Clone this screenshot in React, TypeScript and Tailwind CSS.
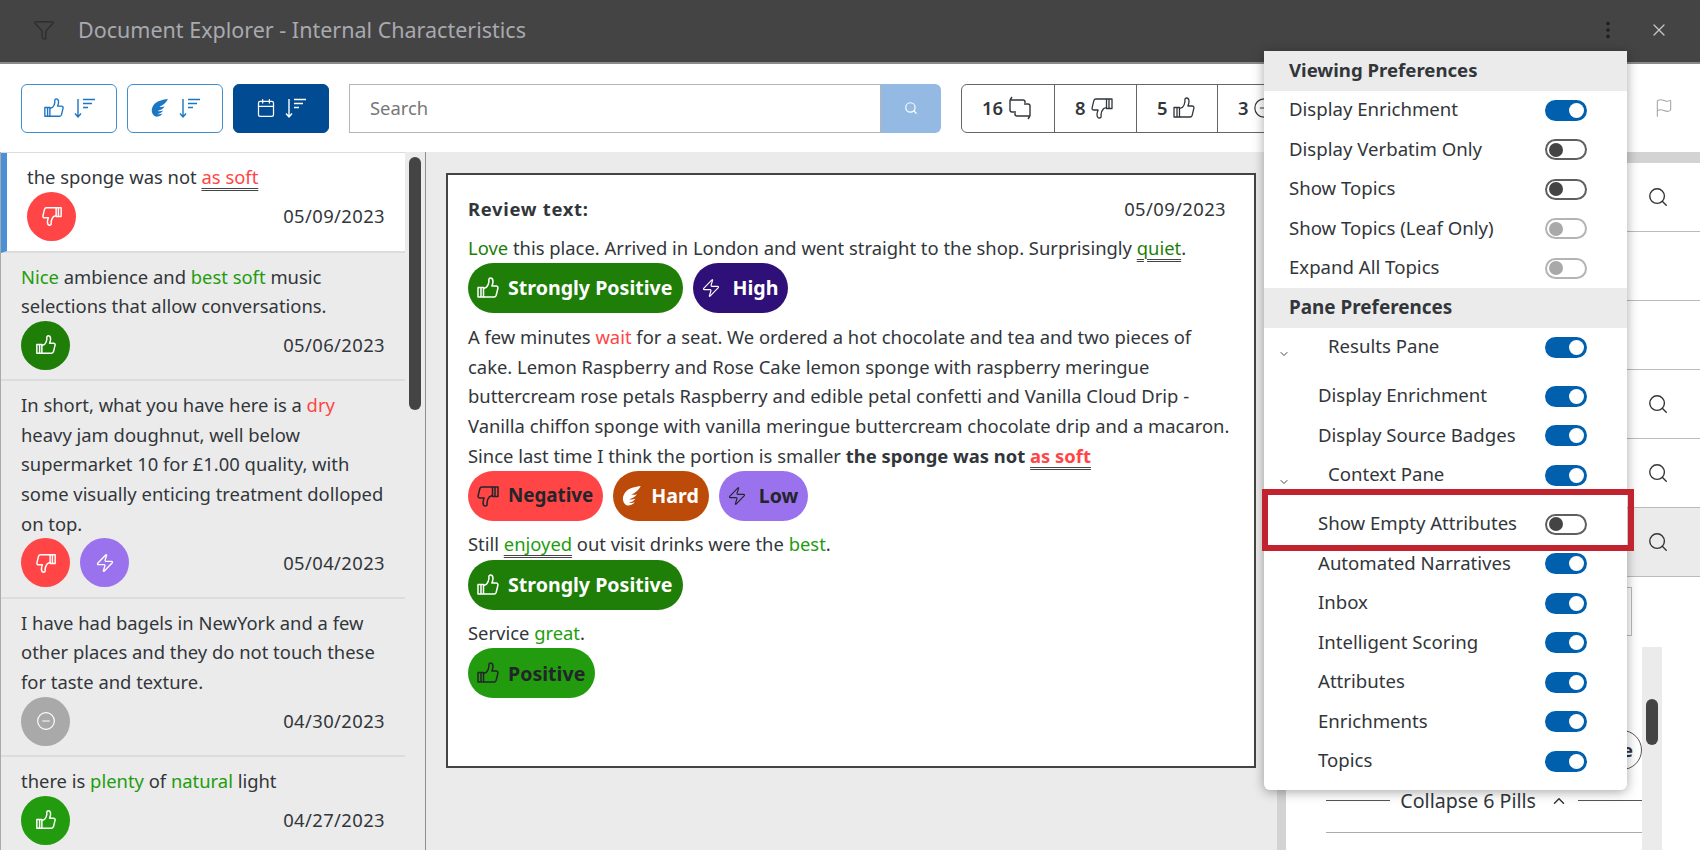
import { Calendar, ChevronDown, ChevronUp, EllipsisVertical, Flag, Funnel, MinusCircle, Search, X, Zap } from "lucide-react";
import type { ReactNode } from "react";

const font = "font-['Noto_Sans','Open_Sans',sans-serif]";

const Thumb = ({ className, sw = 1.5 }: { className?: string; sw?: number }) => (
  <svg viewBox="0 0 24 24" className={className} fill="none" stroke="currentColor" strokeWidth={sw} strokeLinejoin="round">
    <path d="M2 11.500h5.500V21H2z" />
    <path d="M5 11.500V21M7.500 12.500l3-1.200c1.200-1.300 2.200-3.300 2.400-5.500V3.600c0-1 .7-1.600 1.500-1.600 1.600 0 2.600 1.600 2.600 3.500 0 1.500-.5 3-1.100 4.500h4.200c1.300 0 2.100 1 1.800 2.200l-1.700 7c-.3.900-1 1.800-2 1.800H7.500" />
  </svg>
);

const ThumbDown = ({ className, sw }: { className?: string; sw?: number }) => (
  <Thumb className={`rotate-180 ${className ?? ""}`} sw={sw} />
);

const SortLines = ({ className }: { className?: string }) => (
  <svg viewBox="0 0 22 22" className={className} fill="none" stroke="currentColor" strokeWidth="1.4">
    <path d="M4 2v18M1 16.500 4 20l3-3.500" />
    <path d="M9 2.500h12M9 6.500h9M9 10.500h5" />
  </svg>
);

const EffortIcon = ({ className }: { className?: string }) => (
  <svg viewBox="0 0 20 20" className={className} fill="currentColor">
    <path d="M18 1C13 1.500 7 3 4 6.500 1.500 9.500 1 13.500 3 16.500 4 18 6 19 8 18.500c2-.4 3.500-1.500 4.500-3-1.800.8-3.800 1-5.300.5 1.800-.2 4.500-1.300 6-3.500-2 .7-4 .9-5.700.5C10 12.200 13 11 14.500 8.500c-1.700.5-3.500.6-5 .3C12.500 7.500 16 5 18 1Z" />
  </svg>
);

const RepeatChat = ({ className }: { className?: string }) => (
  <svg viewBox="0 0 26 26" className={className} fill="none" stroke="currentColor" strokeWidth="1.4">
    <path d="M3 5h13a2 2 0 0 1 2 2v3M3 5l2-3M3 5v10a2 2 0 0 0 2 2h2" />
    <path d="M23 21H10a2 2 0 0 1-2-2v-3M23 21l-2 3M23 21V11a2 2 0 0 0-2-2h-2" />
  </svg>
);

const Toggle = ({ state }: { state: "on" | "off" | "disabled" }) => {
  if (state === "on") {
    return (
      <span className="flex h-[21px] w-[42px] items-center justify-end rounded-full bg-[#0060ae] pr-[3px]">
        <span className="h-[15px] w-[15px] rounded-full bg-white" />
      </span>
    );
  }
  if (state === "off") {
    return (
      <span className="flex h-[21px] w-[42px] items-center rounded-full border-2 border-[#5f5f5f] bg-white pl-[2px]">
        <span className="h-[14px] w-[14px] rounded-full bg-[#444]" />
      </span>
    );
  }
  return (
    <span className="flex h-[21px] w-[42px] items-center rounded-full border-2 border-[#b4b4b4] bg-white pl-[2px]">
      <span className="h-[14px] w-[14px] rounded-full bg-[#a9a9a9]" />
    </span>
  );
};

const PrefRow = ({ label, state, indent, chevron, h }: { label: string; state: "on" | "off" | "disabled"; indent?: boolean; chevron?: boolean; h?: string }) => (
  <div className={`relative flex items-center justify-between pr-10 text-[18.6px] ${h ?? "h-[39.5px]"} ${indent ? "pl-[54px]" : chevron ? "pl-[64px]" : "pl-[25px]"}`}>
    {chevron && <ChevronDown className="absolute left-[14px] top-[20px] h-[12px] w-[12px] text-[#444]" />}
    <span className="-mt-[2px]">{label}</span>
    <Toggle state={state} />
  </div>
);

const PrefHeader = ({ children, size }: { children: ReactNode; size: string }) => (
  <div className={`flex h-[39.5px] items-center bg-[#ebebeb] pb-[2px] pl-[25px] font-bold ${size}`}>{children}</div>
);

const Dot = ({ color, children }: { color: string; children: ReactNode }) => (
  <span className={`flex h-[49px] w-[49px] items-center justify-center rounded-full text-white ${color}`}>{children}</span>
);

const Item = ({ text, dots, date, active }: { text: ReactNode; dots: ReactNode; date: string; active?: boolean }) => (
  <div className={`border-b-2 border-[#dcdcdc] pb-[9.5px] pl-[20px] pr-5 pt-[9px] ${active ? "border-l-[6px] border-l-[#4a90d9] bg-white pb-[10px]" : ""}`}>
    <p className="leading-[29.6px]">{text}</p>
    <div className="flex items-center justify-between">
      <div className="flex gap-[10px]">{dots}</div>
      <span className="tracking-[0.4px]">{date}</span>
    </div>
  </div>
);

const Pill = ({ color, icon, size = "text-[19.6px]", children }: { color: string; icon: ReactNode; size?: string; children: ReactNode }) => (
  <span className={`flex h-[50px] items-center gap-[8px] rounded-full pl-[8px] pr-[10px] font-bold ${size} ${color}`}>
    {icon}
    {children}
  </span>
);

const Pos = ({ children }: { children: ReactNode }) => <span className="text-[#229c0e]">{children}</span>;
const Neg = ({ children }: { children: ReactNode }) => <span className="text-[#ff4545]">{children}</span>;
const Dbl = ({ children }: { children: ReactNode }) => (
  <span className="underline decoration-[#444] decoration-double decoration-1 underline-offset-4">{children}</span>
);

const SortButton = ({ active, children }: { active?: boolean; children: ReactNode }) => (
  <button className={`flex h-[49px] w-[96px] items-center justify-center gap-[9px] rounded-md border ${active ? "border-[#004b91] bg-[#004b91] text-white" : "border-[#3e8ed0] bg-white text-[#1b76c4]"}`}>
    {children}
    <SortLines className="h-[22px] w-[22px]" />
  </button>
);

const Stat = ({ n, w, children }: { n: string; w: string; children: ReactNode }) => (
  <div className={`flex h-full items-center gap-1 border-r border-[#666] pl-[20px] font-semibold ${w}`}>
    {n}
    {children}
  </div>
);

const SideRow = ({ icon, active }: { icon?: boolean; active?: boolean }) => (
  <div className={`flex h-[69px] items-center justify-end border-b border-[#bbb] pr-[31px] ${active ? "bg-[#ebebeb]" : ""}`}>
    {icon && <Search className="h-[22px] w-[22px] text-[#333]" strokeWidth={1.5} />}
  </div>
);

export default function App() {
  return (
    <div className={`relative flex h-[850px] w-[1700px] flex-col overflow-hidden bg-white text-[18.4px] text-[#32363a] ${font}`}>
      <header className="flex h-[64px] shrink-0 items-center justify-between border-b-2 border-[#8a8a8a] bg-[#444] pb-[2px] pl-[33px] pr-[31px] text-[#a9a9b0]">
        <div className="flex items-center gap-[23px]">
          <Funnel className="h-[22px] w-[22px] text-[#2e2e2e]" strokeWidth={1.5} />
          <span className="text-[21.5px]">Document Explorer - Internal Characteristics</span>
        </div>
        <div className="flex items-center gap-[30px] text-[#c8c8c8]">
          <EllipsisVertical className="h-[22px] w-[22px] text-[#1f1f1f]" />
          <X className="h-[20px] w-[20px]" strokeWidth={1.5} />
        </div>
      </header>

      <div className="flex h-[88px] shrink-0 items-center gap-[10px] pl-[21px] pr-[26px]">
        <SortButton>
          <Thumb className="h-[22px] w-[22px]" />
        </SortButton>
        <SortButton>
          <EffortIcon className="h-[20px] w-[20px]" />
        </SortButton>
        <SortButton active>
          <Calendar className="h-[20px] w-[20px]" strokeWidth={1.5} />
        </SortButton>
        <div className="ml-[10px] flex h-[49px] w-[592px]">
          <div className="flex flex-1 items-center border border-[#b5b5b5] pl-[20px] text-[#777]">Search</div>
          <div className="flex w-[60px] items-center justify-center rounded-r-md bg-[#94bae3] text-white">
            <Search className="h-[14px] w-[14px]" />
          </div>
        </div>
        <div className="ml-[10px] flex h-[49px] w-[340px] items-center rounded-md border border-[#666]">
          <Stat n="16" w="w-[93px]">
            <RepeatChat className="h-[26px] w-[26px]" />
          </Stat>
          <Stat n="8" w="w-[82px]">
            <ThumbDown className="h-[24px] w-[24px]" sw={1.3} />
          </Stat>
          <Stat n="5" w="w-[81px]">
            <Thumb className="h-[24px] w-[24px]" sw={1.3} />
          </Stat>
          <div className="flex items-center gap-1 pl-[20px] font-semibold">
            3
            <MinusCircle className="h-[22px] w-[22px]" strokeWidth={1.3} />
          </div>
        </div>
        <Flag className="ml-auto h-[20px] w-[20px] text-[#a5a5a5]" strokeWidth={1.3} />
      </div>

      <div className="flex min-h-0 flex-1">
        <aside className="relative w-[426px] shrink-0 overflow-hidden border-l border-r border-l-[#aaa] border-r-[#8e8e8e] bg-[#ebebeb]">
          <div className="w-[404px] border-t border-[#dcdcdc]">
            <Item
              active
              text={
                <>
                  the sponge was not <Dbl><Neg>as soft</Neg></Dbl>
                </>
              }
              dots={<Dot color="bg-[#ff4545]"><ThumbDown className="h-[22px] w-[22px]" sw={1.6} /></Dot>}
              date="05/09/2023"
            />
            <Item
              text={
                <>
                  <Pos>Nice</Pos> ambience and <Pos>best soft</Pos> music selections that allow conversations.
                </>
              }
              dots={<Dot color="bg-[#1e7e08]"><Thumb className="h-[22px] w-[22px]" sw={1.6} /></Dot>}
              date="05/06/2023"
            />
            <Item
              text={
                <>
                  In short, what you have here is a <Neg>dry</Neg> heavy jam doughnut, well below supermarket 10 for £1.00 quality, with some visually enticing treatment dolloped on top.
                </>
              }
              dots={
                <>
                  <Dot color="bg-[#ff4545]"><ThumbDown className="h-[22px] w-[22px]" sw={1.6} /></Dot>
                  <Dot color="bg-[#9b72ed]"><Zap className="h-[20px] w-[20px]" strokeWidth={1.6} /></Dot>
                </>
              }
              date="05/04/2023"
            />
            <Item
              text="I have had bagels in NewYork and a few other places and they do not touch these for taste and texture."
              dots={<Dot color="bg-[#a9a9a9]"><MinusCircle className="h-[20px] w-[20px]" strokeWidth={1.4} /></Dot>}
              date="04/30/2023"
            />
            <Item
              text={
                <>
                  there is <Pos>plenty</Pos> of <Pos>natural</Pos> light
                </>
              }
              dots={<Dot color="bg-[#229c0e]"><Thumb className="h-[22px] w-[22px]" sw={1.6} /></Dot>}
              date="04/27/2023"
            />
          </div>
          <div className="absolute right-[4px] top-[5px] h-[253px] w-[12px] rounded-full bg-[#444]" />
        </aside>

        <main className="w-[851px] shrink-0 bg-[#ebebeb] pl-[20px] pr-[21px] pt-[21px]">
          <article className="h-[595px] border-2 border-[#444] bg-white px-[20px] pt-[19px] leading-[29.6px]">
            <div className="flex justify-between">
              <b className="tracking-[0.7px]">Review text:</b>
              <span className="pr-[8px] tracking-[0.4px]">05/09/2023</span>
            </div>
            <p className="mt-[9px]">
              <span className="text-[#1e7e08]">Love</span> this place. Arrived in London and went straight to the shop. Surprisingly <Dbl><span className="text-[#1e7e08]">quiet</span></Dbl>.
            </p>
            <div className="mt-px flex gap-[10px]">
              <Pill color="bg-[#1e7e08] text-white" icon={<Thumb className="h-[24px] w-[24px]" />}>Strongly Positive</Pill>
              <Pill color="bg-[#2f0f78] text-white" icon={<Zap className="mr-[4px] h-[20px] w-[20px]" strokeWidth={1.4} />}>High</Pill>
            </div>
            <p className="mt-[9px]">
              A few minutes <Neg>wait</Neg> for a seat. We ordered a hot chocolate and tea and two pieces of cake. Lemon Raspberry and Rose Cake lemon sponge with raspberry meringue buttercream rose petals Raspberry and edible petal confetti and Vanilla Cloud Drip - Vanilla chiffon sponge with vanilla meringue buttercream chocolate drip and a macaron. Since last time I think the portion is smaller <b>the sponge was not <Dbl><Neg>as soft</Neg></Dbl></b>
            </p>
            <div className="mt-px flex gap-[10px]">
              <Pill color="bg-[#ff4545] text-[#22262a]" size="text-[18.8px]" icon={<ThumbDown className="h-[24px] w-[24px]" />}>Negative</Pill>
              <Pill color="bg-[#bc4a08] text-white" icon={<EffortIcon className="h-[22px] w-[22px]" />}>Hard</Pill>
              <Pill color="bg-[#9b72ed] text-[#22262a]" icon={<Zap className="mr-[4px] h-[20px] w-[20px]" strokeWidth={1.4} />}>Low</Pill>
            </div>
            <p className="mt-[8px]">
              Still <Dbl><Pos>enjoyed</Pos></Dbl> out visit drinks were the <Pos>best</Pos>.
            </p>
            <div className="mt-px flex">
              <Pill color="bg-[#1e7e08] text-white" icon={<Thumb className="h-[24px] w-[24px]" />}>Strongly Positive</Pill>
            </div>
            <p className="mt-[8px]">
              Service <Pos>great</Pos>.
            </p>
            <div className="mt-px flex">
              <Pill color="bg-[#229c0e] text-[#22262a]" icon={<Thumb className="h-[24px] w-[24px]" />}>Positive</Pill>
            </div>
          </article>
        </main>

        <div className="w-[9px] shrink-0 bg-[#d3d3d3]" />

        <section className="relative min-w-0 flex-1 bg-white">
          <div className="h-[11px] bg-[#d3d3d3]" />
          <SideRow icon />
          <SideRow />
          <SideRow />
          <SideRow icon />
          <SideRow icon />
          <SideRow icon active />
          <div className="ml-[40px] mt-[10px] h-[49px] w-[306px] border border-[#bbb]" />
          <div className="absolute left-[300px] top-[578px] flex h-[40px] w-[56px] items-center justify-end rounded-full border border-[#555] pr-[8px] font-bold">
            e
          </div>
          <div className="absolute right-[38px] top-[495px] bottom-0 w-[20px] bg-[#ebebeb]">
            <div className="ml-[4px] mt-[52px] h-[46px] w-[12px] rounded-full bg-[#444]" />
          </div>
          <div className="absolute left-[40px] right-[58px] top-[634px] flex items-center gap-[10px] text-[19.6px]">
            <span className="h-px flex-1 bg-[#555]" />
            <span className="flex items-center gap-[14px]">
              Collapse 6 Pills <ChevronUp className="h-[18px] w-[18px]" />
            </span>
            <span className="h-px w-[64px] bg-[#555]" />
          </div>
          <div className="absolute left-[40px] right-[58px] top-[680px] border-t border-[#aaa]" />
        </section>
      </div>

      <div className="absolute left-[1264px] top-[51px] w-[363px] rounded-b-md bg-white pb-[9px] shadow-[0_2px_12px_rgba(0,0,0,0.35)]">
        <PrefHeader size="text-[18.6px]">Viewing Preferences</PrefHeader>
        <PrefRow label="Display Enrichment" state="on" />
        <PrefRow label="Display Verbatim Only" state="off" />
        <PrefRow label="Show Topics" state="off" />
        <PrefRow label="Show Topics (Leaf Only)" state="disabled" />
        <PrefRow label="Expand All Topics" state="disabled" />
        <PrefHeader size="text-[18.9px]">Pane Preferences</PrefHeader>
        <PrefRow label="Results Pane" state="on" chevron />
        <PrefRow label="Display Enrichment" state="on" indent h="h-[49px] pt-[9px]" />
        <PrefRow label="Display Source Badges" state="on" indent />
        <PrefRow label="Context Pane" state="on" chevron />
        <PrefRow label="Show Empty Attributes" state="off" indent h="h-[49px] pt-[9px]" />
        <PrefRow label="Automated Narratives" state="on" indent />
        <PrefRow label="Inbox" state="on" indent />
        <PrefRow label="Intelligent Scoring" state="on" indent />
        <PrefRow label="Attributes" state="on" indent />
        <PrefRow label="Enrichments" state="on" indent />
        <PrefRow label="Topics" state="on" indent />
      </div>

      <div className="absolute left-[1262px] top-[489px] h-[62px] w-[372px] border-[6px] border-[#c1242f]" />
    </div>
  );
}
